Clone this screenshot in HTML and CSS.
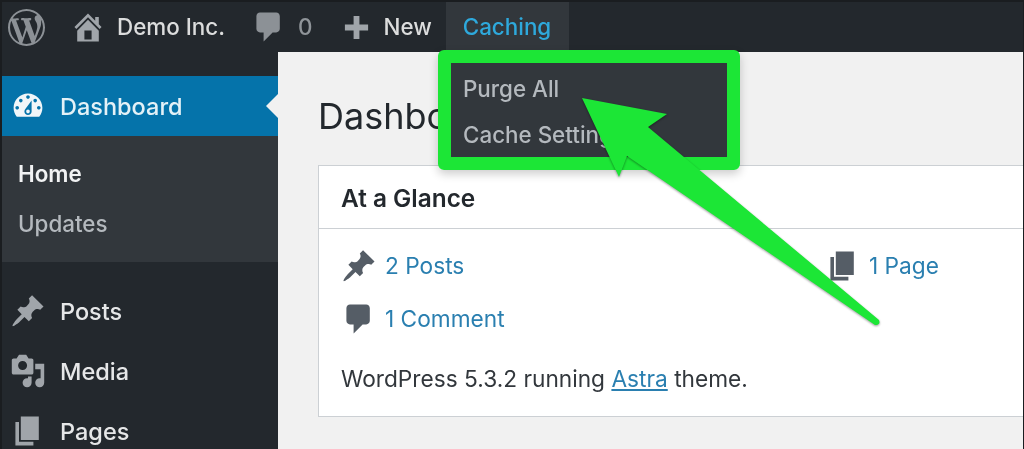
FILE: index.html
```html
<!DOCTYPE html>
<html lang="en">
<head>
    <meta charset="UTF-8">
    <title>Dashboard - Demo Inc.</title>
    <link rel="stylesheet" href="styles.css">
</head>
<body>

<div class="page">
    <header class="adminbar">
        <svg class="bar-logo" viewBox="0 0 20 20"><path d="M20 10c0-5.51-4.49-10-10-10C4.48 0 0 4.49 0 10c0 5.52 4.48 10 10 10 5.51 0 10-4.48 10-10zM7.78 15.37L4.37 6.22c.55-.02 1.17-.08 1.17-.08.5-.06.44-1.13-.06-1.11 0 0-1.45.11-2.37.11-.18 0-.37 0-.58-.01C4.12 2.69 6.87 1.11 10 1.11c2.33 0 4.45.87 6.05 2.34-.68-.11-1.65.39-1.65 1.58 0 .74.45 1.36.9 2.1.35.61.55 1.36.55 2.46 0 1.49-1.4 5-1.4 5l-3.03-8.37c.54-.02.82-.17.82-.17.5-.05.44-1.25-.06-1.22 0 0-1.44.12-2.38.12-.87 0-2.33-.12-2.33-.12-.5-.03-.56 1.2-.06 1.22l.92.08 1.26 3.41zM17.41 10c.24-.64.74-1.87.43-4.25.7 1.29 1.05 2.71 1.05 4.25 0 3.29-1.73 6.24-4.4 7.78.97-2.59 1.94-5.2 2.92-7.78zM6.1 18.09C3.12 16.65 1.11 13.53 1.11 10c0-1.3.23-2.48.72-3.59C3.25 10.3 4.67 14.2 6.1 18.09zm4.03-6.63l2.58 6.98c-.86.29-1.76.45-2.71.45-.79 0-1.57-.11-2.29-.33.81-2.38 1.62-4.74 2.42-7.1z"/></svg>
        <svg class="bar-icon home-icon" viewBox="0 0 20 20"><path d="M16 8.5l1.53 1.53-1.06 1.06L10 4.62l-6.47 6.47-1.06-1.06L10 2.5l4 4v-2h2v4zm-6-2.46l6 5.99V18H4v-5.97zM12 17v-5H8v5h4z"/></svg>
        <span class="bar-label site-name">Demo Inc.</span>
        <svg class="bar-icon comment-icon" viewBox="0 0 20 20"><path d="M5 2h9c1.1 0 2 .9 2 2v7c0 1.1-.9 2-2 2h-2l-5 5v-5H5c-1.1 0-2-.9-2-2V4c0-1.1.9-2 2-2z"/></svg>
        <span class="bar-label comment-count">0</span>
        <svg class="bar-icon plus-icon" viewBox="0 0 20 20"><path d="M8 2h4v6h6v4h-6v6H8v-6H2V8h6z"/></svg>
        <span class="bar-label new-label">New</span>
        <span class="caching-tab">Caching</span>
    </header>

    <div class="wrap">
        <nav class="sidebar">
            <div class="menu-item current">
                <svg class="menu-icon" viewBox="0 0 20 20"><path d="M3.76 16h12.48c1.1-1.37 1.76-3.11 1.76-5 0-4.42-3.58-8-8-8s-8 3.58-8 8c0 1.89.66 3.63 1.76 5zM10 4c.55 0 1 .45 1 1s-.45 1-1 1-1-.45-1-1 .45-1 1-1zM6 6c.55 0 1 .45 1 1s-.45 1-1 1-1-.45-1-1 .45-1 1-1zm8 0c.55 0 1 .45 1 1s-.45 1-1 1-1-.45-1-1 .45-1 1-1zm-5.37 5.55L12 7v6c0 1.1-.9 2-2 2s-2-.9-2-2c0-.57.24-1.08.63-1.45zM4 10c.55 0 1 .45 1 1s-.45 1-1 1-1-.45-1-1 .45-1 1-1zm12 0c.55 0 1 .45 1 1s-.45 1-1 1-1-.45-1-1 .45-1 1-1zm-5 3c0-.55-.45-1-1-1s-1 .45-1 1 .45 1 1 1 1-.45 1-1z"/></svg>
                <span>Dashboard</span>
                <i class="current-arrow"></i>
            </div>
            <div class="submenu">
                <div class="sub-item sub-active">Home</div>
                <div class="sub-item">Updates</div>
            </div>
            <div class="menu-item">
                <svg class="menu-icon" viewBox="0 0 20 20"><path d="M10.44 3.02l1.82-1.82 6.36 6.35-1.83 1.82c-1.05-.68-2.48-.57-3.41.36l-.75.75c-.92.93-1.04 2.35-.35 3.41l-1.83 1.82-2.41-2.41-2.8 2.79c-.42.42-3.38 2.71-3.8 2.29s1.86-3.39 2.28-3.81l2.79-2.79L4.1 9.36l1.83-1.82c1.05.69 2.48.57 3.4-.36l.75-.75c.93-.92 1.05-2.35.36-3.41z"/></svg>
                <span>Posts</span>
            </div>
            <div class="menu-item">
                <svg class="menu-icon" viewBox="0 0 20 20"><path d="M13 11V4c0-.55-.45-1-1-1h-1.67L9 1H5L3.67 3H2c-.55 0-1 .45-1 1v7c0 .55.45 1 1 1h10c.55 0 1-.45 1-1zM7 4.5c1.38 0 2.5 1.12 2.5 2.5S8.38 9.5 7 9.5 4.5 8.38 4.5 7 5.62 4.5 7 4.5zM14 6h5v10.5c0 1.38-1.12 2.5-2.5 2.5S14 17.88 14 16.5s1.12-2.5 2.5-2.5c.17 0 .34.02.5.05V9h-3V6zm-4 8.05V13h2v3.5c0 1.38-1.12 2.5-2.5 2.5S7 17.88 7 16.5 8.12 14 9.5 14c.17 0 .34.02.5.05z"/></svg>
                <span>Media</span>
            </div>
            <div class="menu-item">
                <svg class="menu-icon" viewBox="0 0 20 20"><path d="M6 15V2h10v13H6zm-1 1h8v2H3V5h2v11z"/></svg>
                <span>Pages</span>
            </div>
        </nav>

        <main class="content">
            <h1 class="page-title">Dashboard</h1>
            <section class="card">
                <h2 class="card-title">At a Glance</h2>
                <div class="card-body">
                    <div class="glance">
                        <div class="glance-item">
                            <svg class="glance-icon" viewBox="0 0 20 20"><path d="M10.44 3.02l1.82-1.82 6.36 6.35-1.83 1.82c-1.05-.68-2.48-.57-3.41.36l-.75.75c-.92.93-1.04 2.35-.35 3.41l-1.83 1.82-2.41-2.41-2.8 2.79c-.42.42-3.38 2.71-3.8 2.29s1.86-3.39 2.28-3.81l2.79-2.79L4.1 9.36l1.83-1.82c1.05.69 2.48.57 3.4-.36l.75-.75c.93-.92 1.05-2.35.36-3.41z"/></svg>
                            <a class="link">2 Posts</a>
                        </div>
                        <div class="glance-item">
                            <svg class="glance-icon" viewBox="0 0 20 20"><path d="M6 15V2h10v13H6zm-1 1h8v2H3V5h2v11z"/></svg>
                            <a class="link">1 Page</a>
                        </div>
                        <div class="glance-item">
                            <svg class="glance-icon" viewBox="0 0 20 20"><path d="M5 2h9c1.1 0 2 .9 2 2v7c0 1.1-.9 2-2 2h-2l-5 5v-5H5c-1.1 0-2-.9-2-2V4c0-1.1.9-2 2-2z"/></svg>
                            <a class="link">1 Comment</a>
                        </div>
                    </div>
                    <p class="version">WordPress 5.3.2 running <a class="link underlined">Astra</a> theme.</p>
                </div>
            </section>
        </main>
    </div>

    <!-- dropdown with the green callout on top -->
    <div class="callout">
        <div class="dropdown">
            <div class="drop-item">Purge All</div>
            <div class="drop-item">Cache Settings</div>
        </div>
    </div>
    <svg class="arrow" viewBox="0 0 1024 449">
        <path d="M582 98L667 114L648 127L879 320Q881 325 875 325L627 156L619 177Z"/>
    </svg>
</div>

</body>
</html>
```

FILE: styles.css
```css
* {
    box-sizing: border-box;
}
html, body {
    margin: 0;
    height: 449px;
    overflow: hidden;
    background: #1a1d20;
}
body {
    font-family: Inter, "Liberation Sans", sans-serif;
    font-size: 22.4px;
}
.page {
    position: relative;
    display: flex;
    flex-direction: column;
    height: 449px;
    padding: 2px 1px 0 2px;
    filter: blur(0.75px);
}

/* admin bar */
.adminbar {
    display: flex;
    align-items: center;
    flex: 0 0 50px;
    background: #23282d;
    color: #dcdddd;
    font-weight: 500;
}
.bar-logo {
    width: 37px;
    height: 37px;
    margin-left: 6px;
    fill: #8c9196;
}
.bar-icon {
    flex: none;
    fill: #a0a5aa;
}
.bar-label {
    line-height: 50px;
}
.home-icon {
    width: 36px;
    height: 36px;
    margin-left: 25px;
}
.site-name {
    margin-left: 11px;
}
.comment-icon {
    width: 36px;
    height: 36px;
    margin-left: 26px;
    fill: #8c9196;
}
.comment-count {
    margin-left: 11px;
    color: #8f9499;
}
.plus-icon {
    width: 29px;
    height: 29px;
    margin-left: 30px;
}
.new-label {
    margin-left: 12px;
}
.caching-tab {
    margin-left: 14px;
    padding: 0 18px 0 17px;
    line-height: 50px;
    background: #32373c;
    color: #2ea9dc;
}

.wrap {
    display: flex;
    flex: 1;
    min-height: 0;
}

/* left menu */
.sidebar {
    flex: 0 0 276px;
    padding-top: 24px;
    background: #23282d;
    color: #e6e7e8;
    font-weight: 500;
}
.menu-item {
    position: relative;
    display: flex;
    align-items: center;
    height: 60px;
    padding-left: 8px;
    font-size: 23.5px;
}
.menu-icon {
    width: 36px;
    height: 36px;
    margin-right: 14px;
    fill: #a0a5aa;
}
.menu-item.current {
    background: #0573aa;
    color: #e4f1f7;
}
.menu-item.current .menu-icon {
    fill: #f1f6f9;
}
.current-arrow {
    position: absolute;
    right: 0;
    top: 18px;
    border: 12px solid transparent;
    border-left: 0;
    border-right-color: #f1f1f1;
}
.submenu {
    display: flex;
    flex-direction: column;
    height: 126px;
    margin-bottom: 19px;
    padding: 13px 0 0 16px;
    background: #32373c;
    color: #b4b9be;
}
.sub-item {
    height: 50px;
    line-height: 50px;
}
.sub-active {
    font-weight: 600;
    color: #f1f2f3;
}

/* content */
.content {
    flex: 1;
    min-width: 0;
    padding: 0 0 0 40px;
    background: #f1f1f1;
}
.page-title {
    margin: 0;
    padding-top: 39px;
    height: 113px;
    font-size: 36px;
    line-height: 50px;
    font-weight: 400;
    color: #23282d;
}
.card {
    height: 252px;
    background: #fff;
    border: 1px solid #ccd0d4;
    border-right: 0;
    color: #32373c;
    font-size: 22.7px;
}
.card-title {
    margin: 0;
    height: 63px;
    padding-left: 22px;
    font-size: 24.4px;
    line-height: 65px;
    font-weight: 600;
    color: #23282d;
    border-bottom: 1px solid #ccd0d4;
}
.card-body {
    padding: 10px 0 0 22px;
}
.glance {
    display: grid;
    grid-template-columns: 484px 1fr;
    grid-auto-rows: 53px;
}
.glance-item {
    display: flex;
    align-items: center;
}
.glance-icon {
    width: 36px;
    height: 36px;
    margin-right: 8px;
    fill: #555d66;
}
.link {
    color: #2a7fb0;
}
.underlined {
    text-decoration: underline;
}
.version {
    margin: 14px 0 0;
    line-height: 40px;
}

/* dropdown callout */
.callout {
    position: absolute;
    left: 438px;
    top: 50px;
    width: 302px;
    height: 120px;
    border: 13px solid #1ce636;
    border-radius: 6px;
    box-shadow: 0 4px 10px rgba(0, 0, 0, 0.2);
}
.dropdown {
    height: 100%;
    overflow: hidden;
    padding: 3px 0 0 12px;
    background: #32373c;
    color: #b4b9be;
    font-weight: 500;
}
.drop-item {
    height: 46px;
    line-height: 46px;
    white-space: nowrap;
}
.arrow {
    position: absolute;
    left: 0;
    top: 0;
    width: 1024px;
    height: 449px;
    fill: #1ce636;
    filter: drop-shadow(0 1px 1px rgba(0, 0, 0, 0.4));
}
```
